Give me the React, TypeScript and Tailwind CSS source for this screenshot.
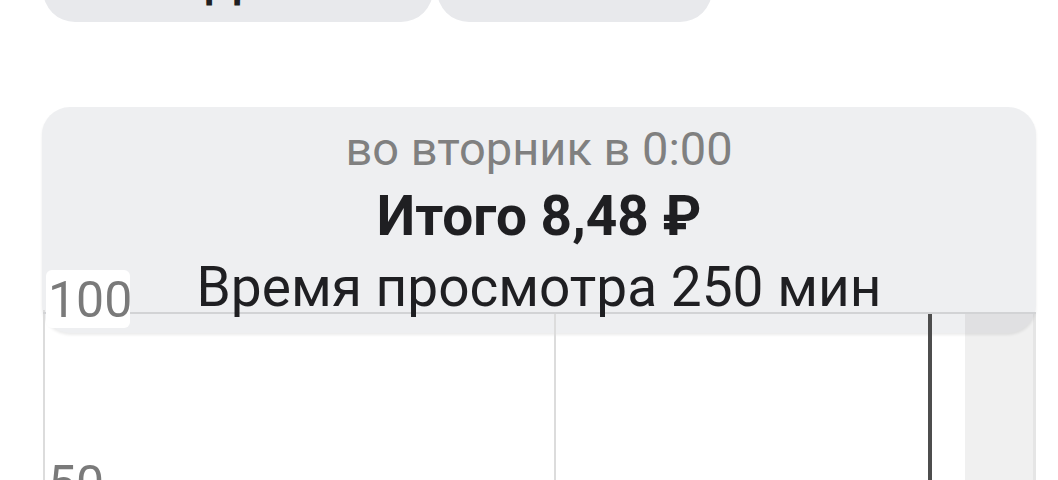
export default function App() {
  return (
    <div className="relative w-[1058px] h-[480px] overflow-hidden bg-white font-['Roboto',_'Noto_Sans',_sans-serif]">
      {/* period tabs, scrolled mostly out of view */}
      <div className="flex gap-[4px] pl-[43px] -mt-[68px]">
        <div className="w-[390px] h-[90px] rounded-[32px] bg-[#e8e9ec] flex items-end justify-center pl-[50px] pb-[17px] text-[48px] leading-none font-medium text-[#1f1f22]">
          День
        </div>
        <div className="w-[275px] h-[90px] rounded-[32px] bg-[#e8e9ec] flex items-end justify-center pb-[17px] text-[48px] leading-none font-medium text-[#1f1f22]">
          Всё
        </div>
      </div>

      <div className="relative mt-[85px]">
        {/* tooltip card: background sits under the chart lines, text above them */}
        <div className="absolute left-[42px] top-0 w-[994px] h-[226px] rounded-[28px] bg-[#eeeff1] shadow-[0_2px_3px_rgba(0,0,0,0.08)] flex flex-col items-center pt-[10px]">
          <div className="relative z-20 h-[64px] text-[47px] text-[#808080] leading-[64px]">во вторник в 0:00</div>
          <div className="relative z-20 h-[70px] text-[55px] font-bold text-[#1f1f22] leading-[70px]">Итого 8,48 ₽</div>
          <div className="relative z-20 h-[72px] text-[55px] text-[#1f1f22] leading-[72px]">Время просмотра 250 мин</div>
        </div>

        {/* chart */}
        <svg className="relative z-10 block" width="1058" height="373" viewBox="0 107 1058 373">
          <rect x="965" y="313" width="68" height="167" fill="rgba(0,0,0,0.06)" />
          <rect x="1033" y="313" width="3" height="167" fill="rgba(0,0,0,0.1)" />
          <line x1="44" y1="310" x2="44" y2="480" stroke="#dcdcdc" strokeWidth="2" />
          <line x1="555" y1="313" x2="555" y2="480" stroke="#dcdcdc" strokeWidth="2" />
          <line x1="43" y1="313" x2="1036" y2="313" stroke="#d2d3d5" strokeWidth="2" />
          <line x1="930" y1="314" x2="930" y2="480" stroke="#4d4d4d" strokeWidth="4" />
          <rect x="46" y="270" width="84" height="58" rx="6" fill="#ffffff" />
          <text x="48" y="317" fontSize="50" fill="#7a7a7a" fontFamily="Roboto, sans-serif">100</text>
          <text x="48" y="501" fontSize="50" fill="#7a7a7a" fontFamily="Roboto, sans-serif">50</text>
        </svg>
      </div>
    </div>
  )
}
